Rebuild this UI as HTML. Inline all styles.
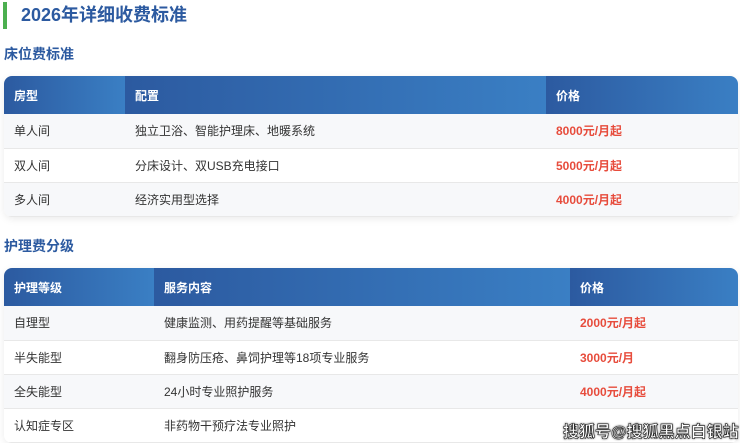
<!DOCTYPE html>
<html><head><meta charset="utf-8"><style>
*{margin:0;padding:0;box-sizing:border-box}
body{width:740px;height:443px;overflow:hidden;background:#fff;font-family:"Liberation Sans","Noto Sans CJK SC",sans-serif;position:relative}
.t1{position:absolute;left:3px;top:2px;height:27px;border-left:4px solid #4caf50;padding-left:14px;font-size:18px;font-weight:bold;color:#2c5aa0;line-height:27px}
.h3{position:absolute;left:4px;font-size:14px;font-weight:bold;color:#2c5aa0}
table{position:absolute;left:4px;width:734px;border-collapse:collapse;font-size:12px;color:#333;border-radius:8px;overflow:hidden;box-shadow:0 2px 8px rgba(0,0,0,.08)}
th{background:linear-gradient(90deg,#2c5aa0,#3a7fc4);color:#fff;text-align:left;font-weight:bold;height:38px;padding-left:10px;font-size:12px}
td{height:34px;padding-left:10px;border-bottom:1px solid #e8e8e8}
tr:nth-child(even) td{background:#f7f8fa}
.p{color:#e74c3c;font-weight:bold}
.wm{position:absolute;left:563px;top:418px;font-size:16px;font-weight:bold;color:#fff;-webkit-text-stroke:0.6px #222;text-shadow:0 0 2px #000}
</style></head><body>
<div class="t1">2026年详细收费标准</div>
<div class="h3" style="top:44px">床位费标准</div>
<table style="top:76px">
<tr><th style="width:121px">房型</th><th style="width:421px">配置</th><th>价格</th></tr>
<tr><td>单人间</td><td>独立卫浴、智能护理床、地暖系统</td><td class="p">8000元/月起</td></tr>
<tr><td>双人间</td><td>分床设计、双USB充电接口</td><td class="p">5000元/月起</td></tr>
<tr><td>多人间</td><td>经济实用型选择</td><td class="p">4000元/月起</td></tr>
</table>
<div class="h3" style="top:236px">护理费分级</div>
<table style="top:268px">
<tr><th style="width:150px">护理等级</th><th style="width:416px">服务内容</th><th>价格</th></tr>
<tr><td>自理型</td><td>健康监测、用药提醒等基础服务</td><td class="p">2000元/月起</td></tr>
<tr><td>半失能型</td><td>翻身防压疮、鼻饲护理等18项专业服务</td><td class="p">3000元/月</td></tr>
<tr><td>全失能型</td><td>24小时专业照护服务</td><td class="p">4000元/月起</td></tr>
<tr><td>认知症专区</td><td>非药物干预疗法专业照护</td><td class="p"></td></tr>
</table>
<div class="wm">搜狐号@搜狐黑点白银站</div>
</body></html>
